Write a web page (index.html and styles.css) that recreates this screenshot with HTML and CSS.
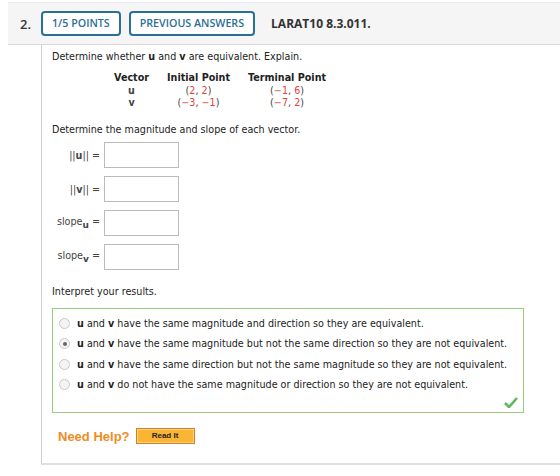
FILE: index.html
```html
<!DOCTYPE html>
<html lang="en">
<head>
  <meta charset="UTF-8" />
  <title>LARAT10 8.3.011.</title>
  <link rel="stylesheet" href="styles.css">
</head>
<body>
  <div class="qhead">
    <span class="qnum">2.</span>
    <span class="pill">1/5 POINTS</span>
    <span class="pill">PREVIOUS ANSWERS</span>
    <span class="qref">LARAT10 8.3.011.</span>
  </div>

  <div class="qbody">
    <p class="line first">Determine whether <b>u</b> and <b>v</b> are equivalent. Explain.</p>

    <table class="points">
      <tr><th>Vector</th><th>Initial Point</th><th>Terminal Point</th></tr>
      <tr><td><b>u</b></td><td>(<i>2</i>, <i>2</i>)</td><td>(<i>&minus;1</i>, <i>6</i>)</td></tr>
      <tr><td><b>v</b></td><td>(<i>&minus;3</i>, <i>&minus;1</i>)</td><td>(<i>&minus;7</i>, <i>2</i>)</td></tr>
    </table>

    <p class="line">Determine the magnitude and slope of each vector.</p>

    <div class="answers">
      <div class="arow"><span class="lbl">||<b>u</b>|| =</span><span class="box"></span></div>
      <div class="arow"><span class="lbl">||<b>v</b>|| =</span><span class="box"></span></div>
      <div class="arow"><span class="lbl">slope<sub>u</sub> =</span><span class="box"></span></div>
      <div class="arow"><span class="lbl">slope<sub>v</sub> =</span><span class="box"></span></div>
    </div>

    <p class="line">Interpret your results.</p>

    <div class="choices">
      <div class="opt"><span class="radio"></span><span><b>u</b> and <b>v</b> have the same magnitude and direction so they are equivalent.</span></div>
      <div class="opt"><span class="radio on"></span><span><b>u</b> and <b>v</b> have the same magnitude but not the same direction so they are not equivalent.</span></div>
      <div class="opt"><span class="radio"></span><span><b>u</b> and <b>v</b> have the same direction but not the same magnitude so they are not equivalent.</span></div>
      <div class="opt"><span class="radio"></span><span><b>u</b> and <b>v</b> do not have the same magnitude or direction so they are not equivalent.</span></div>
      <svg class="check" width="14" height="11" viewBox="0 0 14 11">
        <path d="M1 6 L5 10 L13 1" fill="none" stroke="#5cb85c" stroke-width="2.6"/>
      </svg>
    </div>

    <div class="help">
      <span class="need">Need Help?</span>
      <span class="readit">Read It</span>
    </div>
  </div>
</body>
</html>
```

FILE: styles.css
```css
body {
  margin: 0;
  background: #fff;
  font-family: "DejaVu Sans", Verdana, sans-serif;
  color: #222;
}

.qhead {
  margin: 2px 0 0 8px;
  height: 41px;
  background: #f5f5f5;
  border-top: 1px solid #ebebeb;
  border-bottom: 1px solid #d8d8d8;
  display: flex;
  align-items: center;
  font-family: "Open Sans", sans-serif;
  font-weight: 600;
}

.qnum {
  font-size: 13px;
  color: #333;
  margin-left: 12px;
  width: 21px;
}

.pill {
  border: 2px solid #2a6f97;
  border-radius: 4px;
  background: #fff;
  color: #2a6f97;
  font-size: 10.7px;
  height: 21px;
  line-height: 21px;
  padding: 0 9px;
  margin-right: 8px;
}

.qref {
  margin-left: 8px;
  font-size: 12px;
  font-weight: 700;
  color: #333;
}

.qbody {
  margin-left: 41px;
  border-left: 1px solid #d0d0d0;
  border-bottom: 2px solid #e0e0e0;
  padding: 4px 0 0 10px;
  height: 414px;
  font-size: 9.6px;
}

.line {
  margin: 0;
  line-height: 16px;
  white-space: nowrap;
}

.points {
  border-collapse: collapse;
  margin: 6px 0 0 53px;
  text-align: center;
}

.points th {
  font-weight: bold;
  padding: 0 9px;
  line-height: 14px;
  height: 14px;
}

.points td {
  line-height: 12px;
  padding: 0;
  color: #444;
}

.points i {
  font-style: normal;
  color: #e8413a;
}

.points + .line {
  margin-top: 13px;
}

.answers {
  margin-top: 4px;
}

.arow {
  display: flex;
  align-items: center;
  margin-bottom: 8px;
}

.lbl {
  width: 48px;
  text-align: right;
  padding-right: 4px;
  color: #444;
}

.lbl sub {
  font-weight: bold;
  font-size: 9px;
}

.box {
  width: 73px;
  height: 24px;
  border: 1px solid #bbb;
  background: #fff;
}

.answers + .line {
  margin-top: 14px;
}

.choices {
  position: relative;
  margin-top: 8px;
  width: 472px;
  height: 105px;
  border: 1px solid #9ccb7d;
  padding-top: 4px;
  box-sizing: border-box;
}

.opt {
  display: flex;
  align-items: center;
  height: 20.5px;
  padding-left: 6px;
  white-space: nowrap;
}

.radio {
  width: 9px;
  height: 9px;
  border-radius: 50%;
  border: 1px solid #c8c8c8;
  background: #f4f4f4;
  margin-right: 7px;
  position: relative;
  flex: none;
}

.radio.on::after {
  content: "";
  position: absolute;
  left: 2.5px;
  top: 2.5px;
  width: 4px;
  height: 4px;
  border-radius: 50%;
  background: #666;
}

.check {
  position: absolute;
  right: 5px;
  bottom: 4px;
}

.help {
  display: flex;
  align-items: center;
  margin: 15px 0 0 6px;
}

.need {
  font-family: "Liberation Sans", Arial, sans-serif;
  font-weight: bold;
  font-size: 13px;
  color: #f08c1e;
  margin-right: 6px;
}

.readit {
  font-family: "Liberation Sans", Arial, sans-serif;
  font-weight: bold;
  font-size: 8px;
  color: #222;
  width: 57px;
  height: 14px;
  line-height: 14px;
  text-align: center;
  background: #fbb534;
  border: 1px solid #d0822a;
  box-shadow: inset 0 0 0 1px #ffd27a;
}
```
